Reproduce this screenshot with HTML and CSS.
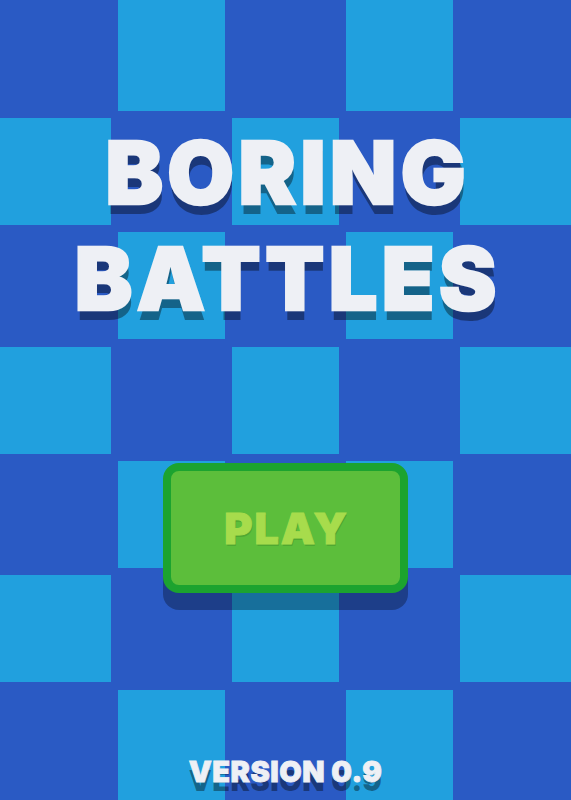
FILE: index.html
```html
<!DOCTYPE html>
<html lang="en">
<head>
<meta charset="utf-8">
<title>Boring Battles</title>
<link rel="stylesheet" href="styles.css">
</head>
<body>
<main class="screen">
  <div class="board" aria-hidden="true">
    <div class="cell"></div><div class="cell lt"></div><div class="cell"></div><div class="cell lt"></div><div class="cell"></div>
    <div class="cell lt"></div><div class="cell"></div><div class="cell lt"></div><div class="cell"></div><div class="cell lt"></div>
    <div class="cell"></div><div class="cell lt"></div><div class="cell"></div><div class="cell lt"></div><div class="cell"></div>
    <div class="cell lt"></div><div class="cell"></div><div class="cell lt"></div><div class="cell"></div><div class="cell lt"></div>
    <div class="cell"></div><div class="cell lt"></div><div class="cell"></div><div class="cell lt"></div><div class="cell"></div>
    <div class="cell lt"></div><div class="cell"></div><div class="cell lt"></div><div class="cell"></div><div class="cell lt"></div>
    <div class="cell"></div><div class="cell lt"></div><div class="cell"></div><div class="cell lt"></div><div class="cell"></div>
  </div>
  <div class="content">
    <h1 class="title"><span>BORING</span><span>BATTLES</span></h1>
    <button class="play" type="button"><span>PLAY</span></button>
    <p class="version">VERSION 0.9</p>
  </div>
</main>
</body>
</html>
```
FILE: styles.css
```css
html, body {
  margin: 0;
  padding: 0;
  background: #2a5ac4;
}

.screen {
  position: relative;
  width: 571px;
  height: 800px;
  overflow: hidden;
  background: #2a5ac4;
  font-family: Inter, "Liberation Sans", sans-serif;
}

/* checkerboard backdrop; edge tiles run to the screen border */
.board {
  position: absolute;
  inset: 0;
  display: grid;
  grid-template-columns: 110.6px repeat(3, 1fr) 110.6px;
  grid-template-rows: 110.6px repeat(5, 1fr) 110.4px;
  gap: 7.2px;
}

.cell.lt {
  background: #21a0de;
}

.content {
  position: relative;
  height: 100%;
  display: flex;
  flex-direction: column;
  align-items: center;
}

.title {
  margin: 0;
  padding-top: 120px;
  display: flex;
  flex-direction: column;
  align-items: center;
  font-size: 86px;
  font-weight: 900;
  line-height: 106px;
  letter-spacing: 4.5px;
  color: #eef0f5;
  -webkit-text-stroke: 2.5px #eef0f5;
  text-shadow: 1px 10px 0 rgba(0, 0, 0, 0.38);
}

.title span {
  margin-right: -4.5px;
}

.play {
  margin-top: 131px;
  width: 245px;
  height: 130px;
  box-sizing: border-box;
  padding: 0;
  border: 8px solid #1ca32f;
  border-radius: 16px;
  background: #5cbe3b;
  box-shadow: 0 17px 0 rgba(0, 0, 0, 0.3);
  display: flex;
  align-items: center;
  justify-content: center;
  font-family: inherit;
  font-size: 43px;
  font-weight: 900;
  letter-spacing: 2px;
  color: #a7dc4c;
  -webkit-text-stroke: 1px #a7dc4c;
  text-shadow: 1px 2px 0 #4fa832;
  cursor: pointer;
}

.play span {
  margin-right: -2px;
}

.version {
  margin: auto 0 0;
  padding-bottom: 13px;
  font-size: 29px;
  font-weight: 900;
  line-height: 30px;
  letter-spacing: 0.5px;
  color: #eef0f5;
  -webkit-text-stroke: 0.8px #eef0f5;
  text-shadow: 0 9px 0 rgba(0, 0, 0, 0.38);
}
```
